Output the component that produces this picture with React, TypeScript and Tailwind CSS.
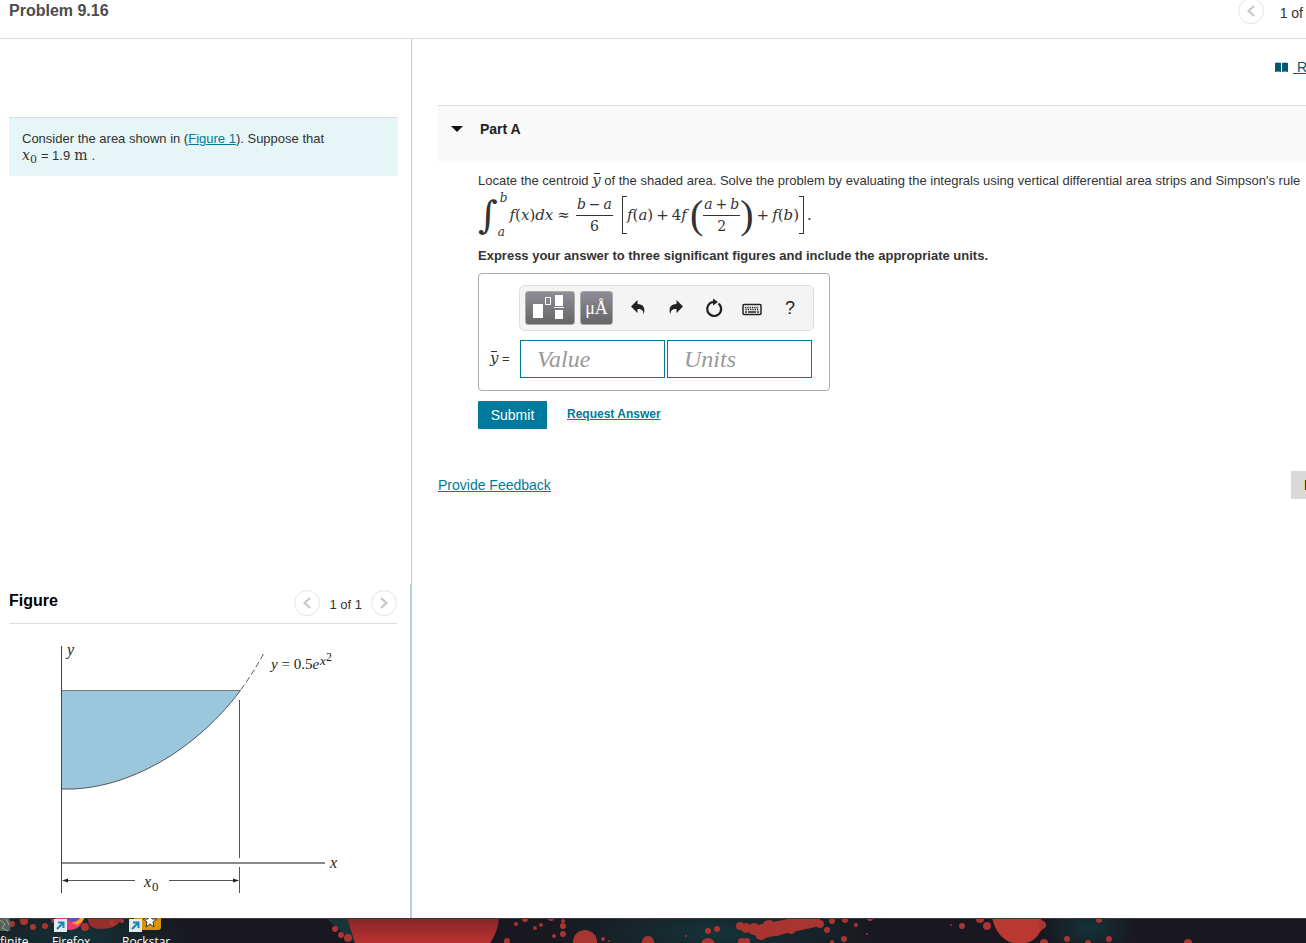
import React from "react";

const App = () => {
  return (
    <div className="flex h-screen flex-col overflow-hidden bg-white font-['Liberation_Sans',Arial,sans-serif] text-[13px] leading-4 text-[#333]">
      <Header />
      <div className="flex min-h-0 flex-1">
        <aside className="flex w-[412px] shrink-0 flex-col">
          <Introduction />
          <Figure />
        </aside>
        <main className="min-w-0 flex-1 overflow-hidden pl-[26px]">
          <ReviewLink />
          <PartA />
          <PageFooter />
        </main>
      </div>
      <Desktop />
    </div>
  );
};

const Header = () => (
  <header className="flex h-[39px] shrink-0 items-start justify-between border-b border-[#ddd] pl-[9px] pr-[3px]">
    <h1 className="text-base font-bold leading-[22px] text-[#4c4c4c]">
      Problem 9.16
    </h1>
    <div className="-mt-[2px] flex items-center gap-4 text-sm">
      <PagerButton label="Previous problem" direction="left" />
      <span className="pt-[3px]">1 of</span>
    </div>
  </header>
);

interface PagerButtonProps {
  label: string;
  direction: "left" | "right";
}

const PagerButton = ({ label, direction }: PagerButtonProps) => (
  <button
    type="button"
    aria-label={label}
    className="flex size-[26px] items-center justify-center rounded-full border border-[#e4e4e4] bg-white"
  >
    <svg width="8" height="12" viewBox="0 0 8 12" fill="none">
      <path
        d={direction === "left" ? "M7 1 1.5 6 7 11" : "M1 1 6.500 6 1 11"}
        stroke="#c4c4c4"
        strokeWidth="2"
      />
    </svg>
  </button>
);

const Introduction = () => (
  <section className="flex-1 border-r border-[#c0c9d6] pl-[9px] pr-[13px] pt-[78px]">
    <div className="border-t border-[#d9dfe1] bg-[#e6f5f6] px-[13px] py-[13px]">
      <p>
        Consider the area shown in (
        <a href="#figure" className="text-[#007a9c] underline">
          Figure 1
        </a>
        ). Suppose that
      </p>
      <p className="flex h-4 items-baseline gap-1">
        <span className="flex items-baseline font-['DejaVu_Serif',serif] text-sm leading-4">
          <i>x</i>
          <sub className="text-[11px] leading-none">0</sub>
        </span>
        <span>= 1.9</span>
        <span className="font-['DejaVu_Serif',serif] text-sm leading-4">m</span>
        <span>.</span>
      </p>
    </div>
  </section>
);

const YBar = () => (
  <span className="relative inline-block font-['DejaVu_Serif',serif] text-[15px] italic leading-none">
    y
    <span className="absolute right-px top-0 w-[6px] border-t border-[#333]" />
  </span>
);

const Figure = () => (
  <section
    id="figure"
    className="shrink-0 border-r-2 border-[#b9cde0] pb-[6px] pl-[9px] pr-[13px] pt-[6px]"
  >
    <div className="flex h-[34px] items-start justify-between border-b border-[#ddd]">
      <h2 className="text-base font-bold leading-[22px] text-black">Figure</h2>
      <div className="flex items-center gap-[9px]">
        <PagerButton label="Previous figure" direction="left" />
        <span className="pt-[3px]">1 of 1</span>
        <PagerButton label="Next figure" direction="right" />
      </div>
    </div>
    <Graph />
  </section>
);

const Graph = () => (
  <svg
    width="388"
    height="288"
    viewBox="9 624 388 288"
    fill="none"
    stroke="#555"
    className="font-['Liberation_Serif',serif]"
  >
    <path
      d="M62 690.500H240.500C190 757 120 791 62 789Z"
      fill="#9ac7dc"
      stroke="none"
    />
    <path d="M62 690.500H240.500" stroke="#777" />
    <path d="M240.500 690.500C190 757 120 791 62 789" stroke="#444" strokeWidth="0.9" />
    <path d="M61.500 646V893" stroke="#444" />
    <path d="M62 863H325" stroke="#888" strokeWidth="2" />
    <path d="M239.500 700V858M239.500 867V893" />
    <path d="M241 689.500Q253 673 264 653" strokeDasharray="6 3" />
    <path d="M64 880.500H135M169 880.500H238" />
    <path d="m62 880.500 6-2v4zM239 880.500l-6-2v4z" fill="#222" stroke="none" />
    <g fill="#222" stroke="none" fontSize="16" fontStyle="italic">
      <text x="67" y="655">y</text>
      <text x="330" y="868">x</text>
      <text x="144" y="887">x</text>
      <text x="152" y="891" fontSize="13" fontStyle="normal">0</text>
      <text x="271" y="669" fontSize="15">
        y<tspan fontStyle="normal"> = 0.5</tspan>e
      </text>
      <text x="320" y="665" fontSize="13">x</text>
      <text x="326" y="661" fontSize="12" fontStyle="normal">2</text>
    </g>
  </svg>
);

const ReviewLink = () => (
  <div className="flex h-[66px] items-start justify-end gap-[5px] pt-[18px] text-sm text-[#005a70]">
    <svg width="13" height="10" viewBox="0 0 13 10" className="mt-[5px]">
      <path
        d="M0 1Q3 0 6 1V10Q3 9 0 10ZM7 1Q10 0 13 1V10Q10 9 7 10Z"
        fill="#005a70"
      />
    </svg>
    <a href="#review" className="-mr-px whitespace-pre underline">
      {" R"}
    </a>
  </div>
);

const PartA = () => (
  <section>
    <div className="flex h-[57px] items-start gap-[17px] border-t border-[#ddd] bg-[#f9f9f9] pl-[13px] pt-[14px]">
      <svg width="12" height="6" viewBox="0 0 12 6" className="mt-[6px]">
        <path d="M0 0H12L6 6Z" fill="#111" />
      </svg>
      <h2 className="text-sm font-bold leading-[18px] text-[#222]">Part A</h2>
    </div>
    <div className="pl-[40px] pt-[11px]">
      <p className="h-4 whitespace-nowrap">
        Locate the centroid <YBar /> of the shaded area. Solve the problem by
        evaluating the integrals using vertical differential area strips and
        Simpson's rule
      </p>
      <SimpsonRule />
      <p className="mt-2 font-bold">
        Express your answer to three significant figures and include the
        appropriate units.
      </p>
      <AnswerBox />
      <div className="mt-[10px] flex items-start gap-5">
        <button
          type="submit"
          className="h-7 w-[69px] rounded-[1px] bg-[#007a9c] text-sm text-white"
        >
          Submit
        </button>
        <a
          href="#answer"
          className="mt-[5px] text-xs font-bold leading-4 text-[#007a9c] underline"
        >
          Request Answer
        </a>
      </div>
    </div>
  </section>
);

interface FractionProps {
  top: React.ReactNode;
  bottom: React.ReactNode;
}

const Fraction = ({ top, bottom }: FractionProps) => (
  <span className="flex flex-col items-center text-sm">
    <span className="flex gap-[3px] border-b border-[#333] px-px pb-[2px] leading-[18px]">
      {top}
    </span>
    <span className="leading-5">{bottom}</span>
  </span>
);

const SimpsonRule = () => (
  <div className="mt-px flex h-[50px] items-center whitespace-nowrap font-['DejaVu_Serif',serif] text-[15px]">
    <span className="text-[38px] leading-[50px]">∫</span>
    <span className="flex h-[50px] flex-col justify-between text-xs italic leading-4">
      <span className="pl-[2px]">b</span>
      <span>a</span>
    </span>
    <span className="ml-[2px]">
      <i>f</i>(<i>x</i>)<i>dx</i>
    </span>
    <span className="ml-[4px]">≈</span>
    <span className="ml-[6px]">
      <Fraction
        top={
          <>
            <i>b</i>
            <span>−</span>
            <i>a</i>
          </>
        }
        bottom="6"
      />
    </span>
    <span className="ml-[9px] h-[38px] w-[5px] border-y border-l border-[#333]" />
    <span>
      <i>f</i>(<i>a</i>)
    </span>
    <span className="mx-[3px]">+</span>
    <span>
      4<i>f</i>
    </span>
    <span className="ml-[3px] font-['Liberation_Serif',serif] text-[40px] leading-[50px]">
      (
    </span>
    <Fraction
      top={
        <>
          <i>a</i>
          <span>+</span>
          <i>b</i>
        </>
      }
      bottom="2"
    />
    <span className="font-['Liberation_Serif',serif] text-[40px] leading-[50px]">
      )
    </span>
    <span className="mx-[3px]">+</span>
    <span>
      <i>f</i>(<i>b</i>)
    </span>
    <span className="h-[38px] w-[5px] border-y border-r border-[#333]" />
    <span className="ml-[3px]">.</span>
  </div>
);

const AnswerBox = () => (
  <form className="mt-[9px] w-[352px] rounded border border-[#aaa] pb-[12px] pl-[11px] pt-[11px]">
    <div className="ml-[29px] flex h-[46px] w-[295px] items-center rounded-md border border-[#ddd] bg-[#f4f4f4] pl-[5px]">
      <button
        type="button"
        aria-label="Templates"
        className="h-[34px] w-[50px] rounded-[3px] border border-[#aaa] bg-linear-to-b from-[#8f8d98] to-[#666]"
      >
        <svg width="48" height="32" viewBox="0 0 48 32" fill="#fff">
          <path d="M7 12h10v14H7zM29 3h8v11h-8zM29 18h8v9h-8zM28 15h10v1H28z" />
          <path d="M19.500 5.500h5v7h-5z" fill="none" stroke="#fff" />
        </svg>
      </button>
      <button
        type="button"
        className="ml-[5px] h-[34px] w-[33px] rounded-[3px] border border-[#aaa] bg-linear-to-b from-[#8f8d98] to-[#666] font-['Liberation_Serif',serif] text-lg leading-8 text-white"
      >
        μÅ
      </button>
      <div className="ml-[6px] flex items-center">
        <ToolButton label="Undo">
          <path
            d="M3 8.500 9.500 2V6C15 6 18 10 15.500 16.500 15.500 12 13.500 10.800 9.500 11V15Z"
            fill="#222"
          />
        </ToolButton>
        <ToolButton label="Redo">
          <path
            d="M17 8.500 10.500 2V6C5 6 2 10 4.500 16.500 4.500 12 6.500 10.800 10.500 11V15Z"
            fill="#222"
          />
        </ToolButton>
        <ToolButton label="Reset">
          <path
            d="M14.500 5.500A7 7 0 1 1 9.500 4"
            fill="none"
            stroke="#222"
            strokeWidth="2.200"
          />
          <path d="M9 0.500 14 4 9 7.500Z" fill="#222" />
        </ToolButton>
        <ToolButton label="Keyboard">
          <rect
            x="1"
            y="6.500"
            width="18"
            height="10"
            rx="1"
            fill="none"
            stroke="#222"
            strokeWidth="1.500"
          />
          <path
            d="M3 9.500H17M3.500 11.500H17"
            stroke="#222"
            strokeWidth="1.300"
            strokeDasharray="1.300 1"
          />
          <path
            d="M3 14H5M6 14H14M15 14H17"
            stroke="#222"
            strokeWidth="1.300"
          />
        </ToolButton>
        <button
          type="button"
          className="w-[38px] text-center text-lg leading-5 text-[#222]"
        >
          ?
        </button>
      </div>
    </div>
    <div className="mt-[9px] flex h-[38px] items-center">
      <label htmlFor="value" className="w-[30px] shrink-0">
        <YBar /> =
      </label>
      <input
        id="value"
        placeholder="Value"
        className="h-[38px] w-[145px] border border-[#007a9c] pl-4 font-['Liberation_Serif',serif] text-2xl italic placeholder:text-[#999]"
      />
      <input
        aria-label="Units"
        placeholder="Units"
        className="ml-[2px] h-[38px] w-[145px] border border-[#007a9c] pl-4 font-['Liberation_Serif',serif] text-2xl italic placeholder:text-[#999]"
      />
    </div>
  </form>
);

interface ToolButtonProps {
  label: string;
  children: React.ReactNode;
}

const ToolButton = ({ label, children }: ToolButtonProps) => (
  <button
    type="button"
    aria-label={label}
    className="flex w-[38px] items-center justify-center"
  >
    <svg width="20" height="20" viewBox="0 0 20 20">
      {children}
    </svg>
  </button>
);

const PageFooter = () => (
  <div className="mt-[42px] flex items-center justify-between text-sm">
    <a href="#feedback" className="text-[#007a9c] underline">
      Provide Feedback
    </a>
    <button
      type="button"
      aria-label="Next"
      className="flex h-7 w-[15px] items-center justify-end bg-[#d9d9d9]"
    >
      <span className="h-[10px] w-[2px] border-l border-[#e5d46a] bg-[#5a2040]" />
    </button>
  </div>
);

const splatters = [
  [12, 6, 3], [24, 3, 4], [33, 9, 3], [45, 8, 3], [54, 2, 3], [85, 9, 4],
  [112, 5, 3], [122, 3, 2], [335, 11, 3], [341, 17, 3], [348, 20, 4],
  [516, 6, 2], [525, 1, 3], [535, 10, 2], [541, 7, 2], [551, 0, 3],
  [554, 18, 2], [563, 3, 2], [563, 8, 3], [563, 16, 3], [507, 23, 3],
  [585, 24, 12], [603, 21, 2], [609, 23, 1], [648, 24, 6], [686, 18, 1],
  [708, 13, 3], [717, 11, 3], [708, 27, 7], [740, 8, 4], [746, 10, 5],
  [754, 11, 6], [761, 16, 6], [769, 9, 7], [777, 12, 6], [784, 8, 5],
  [791, 11, 5], [820, 6, 4], [827, 12, 3], [832, 3, 3], [845, 2, 3],
  [742, 24, 4], [747, 23, 3], [832, 24, 2], [844, 21, 3], [856, 7, 2],
  [870, 0, 3], [867, 16, 1], [951, 7, 1], [962, 8, 3], [980, 1, 4],
  [987, 8, 4], [1042, 7, 4], [1044, 25, 4], [1067, 21, 3], [1088, 25, 3],
  [1109, 21, 3], [1099, 2, 3], [1188, 25, 4],
];

const Desktop = () => (
  <div className="relative h-[25px] shrink-0 overflow-hidden bg-[#19171f] font-['Open_Sans',sans-serif] text-xs text-white">
    <svg className="h-[25px] w-full" viewBox="0 0 1306 25" preserveAspectRatio="none">
      <defs>
        <radialGradient id="teal">
          <stop stopColor="#143338" />
          <stop offset="1" stopColor="#143338" stopOpacity="0" />
        </radialGradient>
        <linearGradient id="red" x2="0" y2="1">
          <stop stopColor="#85252a" />
          <stop offset="1" stopColor="#b9332f" />
        </linearGradient>
      </defs>
      <ellipse cx="75" cy="18" rx="120" ry="35" fill="url(#teal)" />
      <ellipse cx="715" cy="15" rx="170" ry="40" fill="url(#teal)" />
      <ellipse cx="1090" cy="10" rx="50" ry="30" fill="url(#teal)" />
      <path d="M326 0H347L355 25Q340 13 326 0Z" fill="#183439" />
      <path d="M347 0H499Q498 14 490 25H355Z" fill="url(#red)" />
      <path d="M88 0H122Q118 11 100 11 88 11 88 0Z" fill="#94302d" />
      <path d="M752 8 788 1 820 0V8L765 20Z" fill="#a93531" />
      <path d="M992 0H1040L1046 7 1040 14Q1034 26 1018 26 998 24 992 0Z" fill="#b9382f" />
      {splatters.map(([cx, cy, r], index) => (
        <circle key={index} cx={cx} cy={cy} r={r} fill="#a93531" />
      ))}
      <path d="M0 0H1306" stroke="#3c3838" strokeWidth="2" />
    </svg>
    <svg className="absolute left-0 top-0" width="180" height="15">
      <path d="M0 0H9L11 5 10 13H0Z" fill="#536069" />
      <path d="m0 2 5 4-3 4 6 3M6 1l3 6" stroke="#b2a45d" fill="none" />
      <circle cx="70" cy="-2" r="14" fill="#ef3a6a" />
      <path d="M77 7Q84 3 84 0H78L72 5Z" fill="#f3a629" />
      <circle cx="73" cy="-4" r="8" fill="#7246bf" />
      <rect x="134" y="-12" width="27" height="24" rx="3" fill="#d99508" />
      <path d="m150-4 2 5h5l-4 3 1 5-4-3-4 3 1-5-4-3h5Z" fill="#fff" stroke="#333" />
      {[54, 129].map((x) => (
        <g key={x}>
          <rect x={x} y="1" width="13" height="13" fill="#e4e9ec" />
          <path
            d={x === 54 ? "m57 11 6-6M58 4.500h5.500V10" : "m132 11 6-6M133 4.500h5.500V10"}
            stroke="#1684bd"
            strokeWidth="2"
            fill="none"
          />
        </g>
      ))}
    </svg>
    <span className="absolute left-0 top-[16px]">finite</span>
    <span className="absolute left-[52px] top-[16px]">Firefox</span>
    <span className="absolute left-[122px] top-[16px]">Rockstar</span>
  </div>
);

export default App;
